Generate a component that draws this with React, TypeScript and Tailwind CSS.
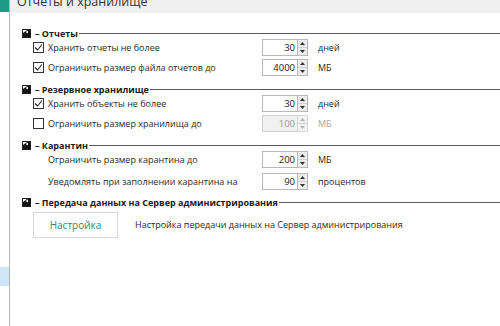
const font = { fontFamily: '"Open Sans", "Noto Sans", sans-serif' };

function SectionIcon() {
  return (
    <svg width="9" height="9" viewBox="0 0 9 9" className="shrink-0">
      <rect x="0.5" y="0.5" width="8" height="8" fill="#fff" stroke="#222" />
      <path d="M1 4 L5 1 L8 1 L8 8 L1 8 Z" fill="#111" />
      <path d="M3.5 3 L6 1.5 L6 4.5 Z" fill="#fff" />
    </svg>
  );
}

function Heading({ title, className = "" }: { title: string; className?: string }) {
  return (
    <div className={`flex items-center h-[12px] pl-[12px] ${className}`}>
      <SectionIcon />
      <span className="ml-[4px] text-[9px] font-bold text-[#1a1a1a] leading-none whitespace-nowrap">
        – {title}
      </span>
      <div className="flex-1 h-px bg-[#5a5a5a] ml-[1px]" />
    </div>
  );
}

function Checkbox({ checked }: { checked?: boolean }) {
  return (
    <div className="w-[11px] h-[11px] border border-[#333] bg-white flex items-center justify-center shrink-0">
      {checked && (
        <svg width="9" height="9" viewBox="0 0 9 9">
          <path d="M1 4.5 L3.5 7 L8 1.5" fill="none" stroke="#222" strokeWidth="1.1" />
        </svg>
      )}
    </div>
  );
}

function Spin({ value, disabled }: { value: string; disabled?: boolean }) {
  return (
    <div className="flex h-[17px] w-[46px] shrink-0">
      <div
        className={`flex-1 border flex items-center justify-end pr-[2px] text-[9.5px] leading-none ${
          disabled ? "bg-[#f1f1f1] border-[#d0d0d0] text-[#9a9a9a]" : "bg-white border-[#b8b8b8] text-[#1a1a1a]"
        }`}
      >
        {value}
      </div>
      <div className={`w-[10px] flex flex-col border border-l-0 ${disabled ? "border-[#d8d8d8] bg-[#f3f3f3]" : "border-[#b8b8b8] bg-[#ececec]"}`}>
        <div className="flex-1 flex items-center justify-center border-b border-[#d0d0d0]">
          <svg width="5" height="3" viewBox="0 0 5 3">
            <path d="M0 3 L2.5 0 L5 3 Z" fill={disabled ? "#b0b0b0" : "#333"} />
          </svg>
        </div>
        <div className="flex-1 flex items-center justify-center">
          <svg width="5" height="3" viewBox="0 0 5 3">
            <path d="M0 0 L2.5 3 L5 0 Z" fill={disabled ? "#b0b0b0" : "#333"} />
          </svg>
        </div>
      </div>
    </div>
  );
}

function Row({
  label,
  value,
  unit,
  checkbox,
  checked,
  disabled,
  className = "",
}: {
  label: string;
  value: string;
  unit: string;
  checkbox?: boolean;
  checked?: boolean;
  disabled?: boolean;
  className?: string;
}) {
  return (
    <div className={`flex items-center h-[17px] pl-[23px] ${className}`}>
      <div className="w-[229px] flex items-center">
        {checkbox ? <Checkbox checked={checked} /> : <div className="w-[11px]" />}
        <span className="ml-[4px] text-[9px] text-[#2a2a2a] whitespace-nowrap leading-none">{label}</span>
      </div>
      <Spin value={value} disabled={disabled} />
      <span className={`ml-[10px] text-[9px] leading-none ${disabled ? "text-[#a8a8a8]" : "text-[#2a2a2a]"}`}>
        {unit}
      </span>
    </div>
  );
}

export default function App() {
  return (
    <div className="w-[500px] h-[326px] overflow-hidden flex bg-white" style={font}>
      {/* sidebar */}
      <div className="w-[10px] h-full border-r border-[#b5b5b5] flex flex-col shrink-0">
        <div className="h-[12px] bg-[#1e9b84]" />
        <div className="h-[255px]" />
        <div className="h-[19px] bg-[#cfe5f8]" />
      </div>

      {/* main */}
      <div className="flex-1 flex flex-col">
        <div className="h-[13px] bg-[#f0f0f0] overflow-hidden pl-[7px]">
          <div className="-mt-[5px] text-[12.5px] leading-[14px] text-[#333] whitespace-nowrap">
            Отчеты и хранилище
          </div>
        </div>

        <div className="flex flex-col pt-[14px]">
          <Heading title="Отчеты" />
          <Row label="Хранить отчеты не более" value="30" unit="дней" checkbox checked />
          <Row className="mt-[3px]" label="Ограничить размер файла отчетов до" value="4000" unit="МБ" checkbox checked />

          <Heading className="mt-[7px]" title="Резервное хранилище" />
          <Row label="Хранить объекты не более" value="30" unit="дней" checkbox checked />
          <Row className="mt-[3px]" label="Ограничить размер хранилища до" value="100" unit="МБ" checkbox disabled />

          <Heading className="mt-[7px]" title="Карантин" />
          <Row label="Ограничить размер карантина до" value="200" unit="МБ" />
          <Row className="mt-[5px]" label="Уведомлять при заполнении карантина на" value="90" unit="процентов" />

          <Heading className="mt-[6px]" title="Передача данных на Сервер администрирования" />
          <div className="flex items-center mt-[4px] pl-[23px]">
            <button className="w-[85px] h-[26px] border border-[#d9d9d9] bg-white text-[10px] text-[#3b8574]">
              Настройка
            </button>
            <span className="ml-[17px] text-[9px] text-[#2a2a2a] whitespace-nowrap">
              Настройка передачи данных на Сервер администрирования
            </span>
          </div>
        </div>
      </div>
    </div>
  );
}
